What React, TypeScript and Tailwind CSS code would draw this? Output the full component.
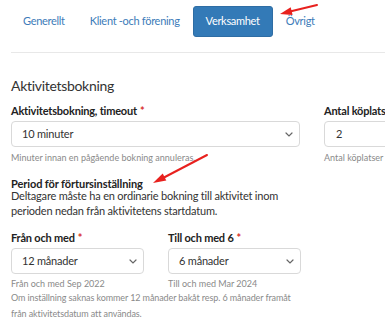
const font = { fontFamily: 'Lato, "Open Sans", sans-serif' };

function Tab({ label, active }: { label: string; active?: boolean }) {
  if (active) {
    return (
      <span className="flex h-[31px] items-center rounded-[3px] border border-[#2e6da4] bg-[#337ab7] px-3 text-[11px] tracking-[-0.3px] text-white">
        {label}
      </span>
    );
  }
  return (
    <span className="flex h-[31px] items-center px-3 text-[11px] tracking-[-0.3px] text-[#3d7cb9]">{label}</span>
  );
}

function Chevron() {
  return (
    <svg width="8" height="5" viewBox="0 0 8 5" fill="none" stroke="#666" strokeWidth="1.2" strokeLinecap="round">
      <path d="M1 1l3 3 3-3" />
    </svg>
  );
}

function Select({ value, width }: { value: string; width: string }) {
  return (
    <div
      className={`flex h-[26px] items-center justify-between rounded-[4px] border border-[#d9d9d9] pl-[10px] pr-[6px] text-[11px] tracking-[-0.2px] text-[#333] ${width}`}
    >
      <span>{value}</span>
      <Chevron />
    </div>
  );
}

function Label({ text, star = true, tight }: { text: string; star?: boolean; tight?: boolean }) {
  return (
    <div
      className={`whitespace-nowrap text-[11px] font-bold text-[#222] ${tight ? 'leading-[12px] tracking-[-0.1px]' : 'leading-[14px] tracking-[-0.2px]'}`}
    >
      {text}
      {star && <span className="ml-[3px] text-[#d9302c]">*</span>}
    </div>
  );
}

function Help({ children }: { children: React.ReactNode }) {
  return <div className="whitespace-nowrap text-[9px] leading-[12px] text-[#8a8a8a]">{children}</div>;
}

export default function App() {
  return (
    <div className="relative h-[336px] w-[385px] overflow-hidden bg-white" style={font}>
      <nav className="ml-[11px] flex items-center gap-[1px] border-b border-[#e8e8e8] pb-[15px] pt-[6px]">
        <Tab label="Generellt" />
        <Tab label="Klient -och förening" />
        <Tab label="Verksamhet" active />
        <Tab label="Övrigt" />
      </nav>

      <div className="pl-[11px]">
        <h2 className="mt-[24px] text-[14px] leading-[18px] tracking-[-0.3px] text-[#333]">Aktivitetsbokning</h2>

        <div className="mt-[9px] flex gap-[24px]">
          <div className="shrink-0">
            <Label text="Aktivitetsbokning, timeout" />
            <div className="mt-[3px]">
              <Select value="10 minuter" width="w-[289px]" />
            </div>
            <div className="mt-[5px]">
              <Help>Minuter innan en pågående bokning annuleras.</Help>
            </div>
          </div>
          <div className="shrink-0">
            <Label text="Antal köplatser" />
            <div className="mt-[3px] flex h-[26px] w-[90px] items-center rounded-[4px] border border-[#d9d9d9] pl-[11px] text-[11px] text-[#333]">
              2
            </div>
            <div className="mt-[5px]">
              <Help>Antal köplatser</Help>
            </div>
          </div>
        </div>

        <div className="mt-[14px]">
          <Label text="Period för förtursinställning" star={false} tight />
          <p className="-mt-[2px] text-[11px] leading-[15px] tracking-[-0.2px] text-[#333]">
            Deltagare måste ha en ordinarie bokning till aktivitet inom
            <br />
            perioden nedan från aktivitetens startdatum.
          </p>
        </div>

        <div className="mt-[13px] flex gap-[24px]">
          <div>
            <Label text="Från och med" />
            <div className="mt-[3px]">
              <Select value="12 månader" width="w-[133px]" />
            </div>
            <div className="mt-[4px]">
              <Help>Från och med Sep 2022</Help>
            </div>
          </div>
          <div>
            <Label text="Till och med 6" />
            <div className="mt-[3px]">
              <Select value="6 månader" width="w-[133px]" />
            </div>
            <div className="mt-[4px]">
              <Help>Till och med Mar 2024</Help>
            </div>
          </div>
        </div>
        <p className="text-[9px] leading-[16px] tracking-[-0.1px] text-[#8a8a8a]">
          Om inställning saknas kommer 12 månader bakåt resp. 6 månader framåt
          <br />
          från aktivitetsdatum att användas.
        </p>
      </div>

      {/* röda pilar */}
      <svg className="pointer-events-none absolute left-0 top-0" width="385" height="336" viewBox="0 0 385 336" fill="none">
        <g stroke="#e8211e" strokeWidth="2" strokeLinecap="round">
          <line x1="317" y1="5" x2="290" y2="11.5" />
          <line x1="207" y1="155" x2="163" y2="178" />
        </g>
        <g fill="#e8211e">
          <path d="M280 14 L292.6 15.1 L290.7 7.3 Z" />
          <path d="M153 183 L166.3 180.6 L162.7 173.5 Z" />
        </g>
      </svg>
    </div>
  );
}
